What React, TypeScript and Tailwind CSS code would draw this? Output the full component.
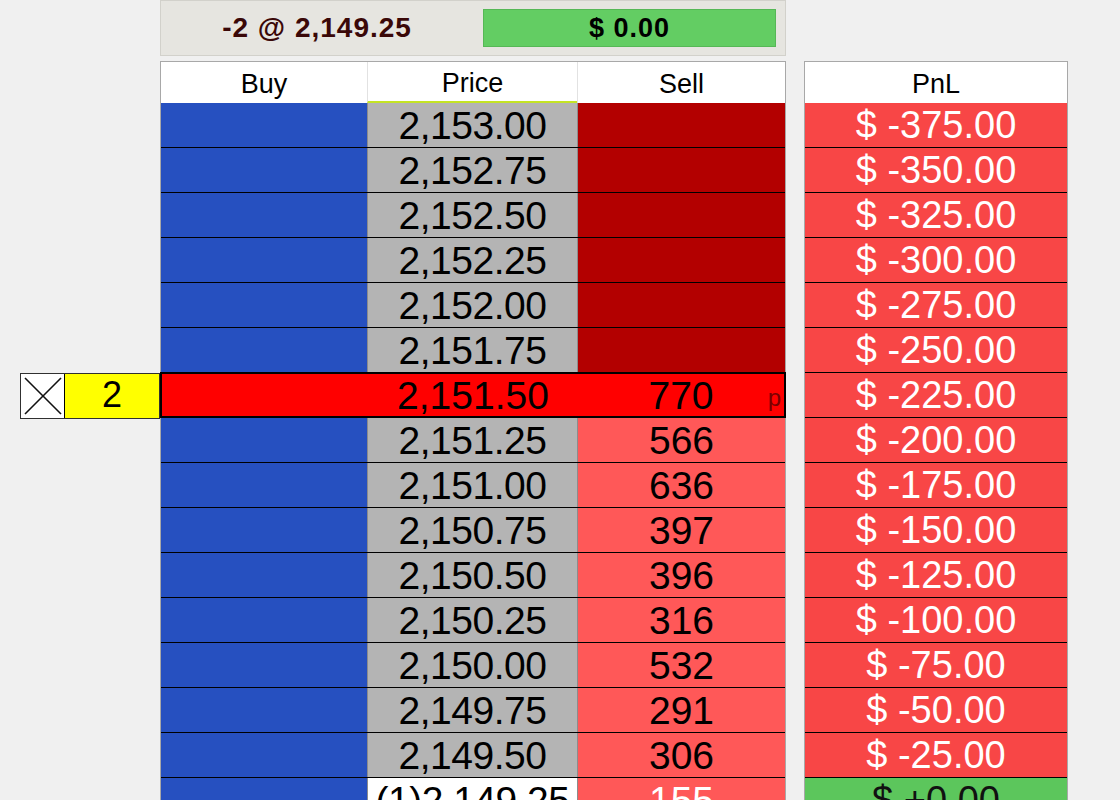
import React from "react";

type Row = {
  price: string;
  sell: string;
  pnl: string;
  kind: "dark" | "current" | "light" | "last";
};

const rows: Row[] = [
  { price: "2,153.00", sell: "", pnl: "$ -375.00", kind: "dark" },
  { price: "2,152.75", sell: "", pnl: "$ -350.00", kind: "dark" },
  { price: "2,152.50", sell: "", pnl: "$ -325.00", kind: "dark" },
  { price: "2,152.25", sell: "", pnl: "$ -300.00", kind: "dark" },
  { price: "2,152.00", sell: "", pnl: "$ -275.00", kind: "dark" },
  { price: "2,151.75", sell: "", pnl: "$ -250.00", kind: "dark" },
  { price: "2,151.50", sell: "770", pnl: "$ -225.00", kind: "current" },
  { price: "2,151.25", sell: "566", pnl: "$ -200.00", kind: "light" },
  { price: "2,151.00", sell: "636", pnl: "$ -175.00", kind: "light" },
  { price: "2,150.75", sell: "397", pnl: "$ -150.00", kind: "light" },
  { price: "2,150.50", sell: "396", pnl: "$ -125.00", kind: "light" },
  { price: "2,150.25", sell: "316", pnl: "$ -100.00", kind: "light" },
  { price: "2,150.00", sell: "532", pnl: "$ -75.00", kind: "light" },
  { price: "2,149.75", sell: "291", pnl: "$ -50.00", kind: "light" },
  { price: "2,149.50", sell: "306", pnl: "$ -25.00", kind: "light" },
  { price: "(1)2,149.25", sell: "155", pnl: "$ +0.00", kind: "last" },
];

function LadderRow({ r }: { r: Row }) {
  if (r.kind === "current") {
    return (
      <div className="flex h-[46px] shrink-0 bg-[#ff0000] border-2 border-black -mt-px -mx-px">
        <div className="w-[206px] shrink-0" />
        <div className="w-[210px] shrink-0 flex items-center justify-center text-[39px] leading-none text-black">
          {r.price}
        </div>
        <div className="flex-1 relative flex items-center justify-center text-[39px] leading-none text-black">
          {r.sell}
          <span className="absolute right-[3px] top-[12px] text-[24px] leading-none text-[#7a0000]">
            p
          </span>
        </div>
      </div>
    );
  }
  const sellBg = r.kind === "dark" ? "bg-[#b30000]" : "bg-[#ff5858]";
  const priceBg = r.kind === "last" ? "bg-white" : "bg-[#b4b4b4]";
  const sellText = r.kind === "last" ? "text-white" : "text-black";
  return (
    <div className="flex h-[45px] shrink-0 border-b border-black">
      <div className="w-[206px] shrink-0 bg-[#2650c0]" />
      <div
        className={`w-[210px] shrink-0 ${priceBg} border-l border-[#8c8c8c] flex items-center justify-center text-[39px] leading-none text-black tracking-[-0.5px]`}
      >
        {r.price}
      </div>
      <div
        className={`flex-1 ${sellBg} border-l border-[#8c8c8c] flex items-center justify-center text-[39px] leading-none ${sellText}`}
      >
        {r.sell}
      </div>
    </div>
  );
}

export default function App() {
  return (
    <div className="w-[1120px] h-[800px] overflow-hidden bg-[#f0f0f0] flex font-['Liberation_Sans',Arial,sans-serif]">
      {/* left: order marker */}
      <div className="w-[160px] shrink-0 pt-[373px] pl-[20px]">
        <div className="flex h-[46px] border border-[#303030]">
          <div className="w-[44px] shrink-0 bg-white border-r border-black flex items-center justify-center">
            <svg width="40" height="40" viewBox="0 0 40 40">
              <line x1="2" y1="2" x2="38" y2="38" stroke="#111" strokeWidth="1.6" />
              <line x1="38" y1="2" x2="2" y2="38" stroke="#111" strokeWidth="1.6" />
            </svg>
          </div>
          <div className="flex-1 bg-[#ffff00] flex items-center justify-center text-[36px] leading-none text-black pb-[2px]">
            2
          </div>
        </div>
      </div>

      {/* middle: ladder */}
      <div className="w-[626px] shrink-0 flex flex-col">
        <div className="h-[56px] shrink-0 bg-[#e6e5e0] border border-[#d2d1cb] flex items-center">
          <div className="w-[312px] shrink-0 flex items-center justify-center text-[28px] font-bold text-[#3a0808] tracking-[1px]">
            -2 @ 2,149.25
          </div>
          <div className="ml-[10px] w-[293px] h-[38px] bg-[#63cd63] border border-[#56b856] flex items-center justify-center text-[27px] font-bold text-black tracking-[1px]">
            $ 0.00
          </div>
        </div>
        <div className="mt-[5px] flex-1 border border-[#a8a8a8] border-b-0 flex flex-col bg-white">
          <div className="flex h-[41px] shrink-0 bg-white">
            <div className="w-[206px] shrink-0 flex items-center justify-center pt-[3px] text-[27px] leading-none text-black">
              Buy
            </div>
            <div className="w-[210px] shrink-0 border-l border-[#e2e2e2] border-b-2 border-b-[#c4e424] flex items-center justify-center pt-[3px] text-[27px] leading-none text-black">
              Price
            </div>
            <div className="flex-1 border-l border-[#e2e2e2] flex items-center justify-center pt-[3px] text-[27px] leading-none text-black">
              Sell
            </div>
          </div>
          {rows.map((r) => (
            <LadderRow key={r.price} r={r} />
          ))}
        </div>
      </div>

      {/* right: PnL */}
      <div className="w-[264px] shrink-0 ml-[18px] pt-[61px]">
        <div className="border border-[#a8a8a8] border-b-0 flex flex-col bg-white">
          <div className="h-[41px] shrink-0 flex items-center justify-center pt-[3px] text-[27px] leading-none text-black">
            PnL
          </div>
          {rows.map((r) => (
            <div
              key={r.pnl}
              className={`h-[45px] shrink-0 border-b border-black flex items-center justify-center text-[38px] leading-none ${
                r.kind === "last" ? "bg-[#5cc65c] text-[#111]" : "bg-[#f84646] text-white"
              }`}
            >
              {r.pnl}
            </div>
          ))}
        </div>
      </div>
    </div>
  );
}
